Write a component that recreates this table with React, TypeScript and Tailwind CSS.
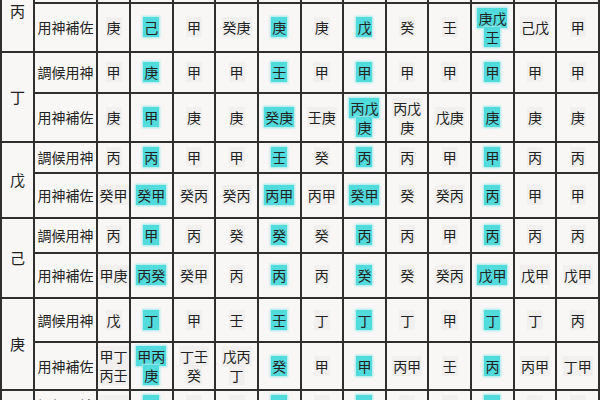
import React from "react";

type Group = { stem: string; tiao: string[]; yong: string[]; hideTiao?: boolean };

const groups: Group[] = [
  {
    stem: "丙",
    hideTiao: true,
    tiao: ["", "", "", "", "", "", "", "", "", "", "", ""],
    yong: ["庚", "己", "甲", "癸庚", "庚", "庚", "戊", "癸", "壬", "庚戊\n壬", "己戊", "甲"],
  },
  {
    stem: "丁",
    tiao: ["甲", "庚", "甲", "甲", "壬", "甲", "甲", "甲", "甲", "甲", "甲", "甲"],
    yong: ["庚", "甲", "庚", "庚", "癸庚", "壬庚", "丙戊\n庚", "丙戊\n庚", "戊庚", "庚", "庚", "庚"],
  },
  {
    stem: "戊",
    tiao: ["丙", "丙", "甲", "甲", "壬", "癸", "丙", "丙", "甲", "甲", "丙", "丙"],
    yong: ["癸甲", "癸甲", "癸丙", "癸丙", "丙甲", "丙甲", "癸甲", "癸", "癸丙", "丙", "甲", "甲"],
  },
  {
    stem: "己",
    tiao: ["丙", "甲", "丙", "癸", "癸", "癸", "丙", "丙", "甲", "丙", "丙", "丙"],
    yong: ["甲庚", "丙癸", "癸甲", "丙", "丙", "丙", "癸", "癸", "癸丙", "戊甲", "戊甲", "戊甲"],
  },
  {
    stem: "庚",
    tiao: ["戊", "丁", "甲", "壬", "壬", "丁", "丁", "丁", "甲", "丁", "丁", "丙"],
    yong: ["甲丁\n丙壬", "甲丙\n庚", "丁壬\n癸", "戊丙\n丁", "癸", "甲", "甲", "丙甲", "壬", "丙", "丙甲", "丁甲"],
  },
  {
    stem: "辛",
    tiao: ["己壬", "壬", "壬", "壬", "壬", "壬", "壬", "壬", "壬", "壬", "丙", "丙"],
    yong: ["", "", "", "", "", "", "", "", "", "", "", ""],
  },
];

const HL = new Set([1, 4, 6, 9]);

function Cell({ text, hl }: { text: string; hl: boolean }) {
  if (!text) return <div className="bg-[#f8f7f5]" />;
  const lines = text.split("\n");
  return (
    <div className="bg-[#f8f7f5] flex items-center justify-center text-center leading-[19px] text-[14px] text-[#222]">
      <div>
        {lines.map((l, i) => (
          <React.Fragment key={i}>
            <span
              className={
                hl
                  ? "bg-[#52dbdc] px-[1px] shadow-[0_0_2px_1px_#a3eaeb]"
                  : "bg-[#f1f0ee] px-[1px]"
              }
            >
              {l}
            </span>
            {i < lines.length - 1 && <br />}
          </React.Fragment>
        ))}
      </div>
    </div>
  );
}

export default function App() {
  return (
    <div
      className="w-[600px] h-[400px] overflow-hidden bg-[#f8f7f5]"
      style={{ fontFamily: '"Noto Sans CJK TC", "Noto Sans CJK SC", sans-serif' }}
    >
      <div className="mt-[-28px] grid grid-cols-[31px_61px_31px_repeat(11,1fr)] grid-rows-[30px_47px_39px_47px_29px_43px_33px_43px_42px_46px_28px_40px] gap-[2px] px-[2px] bg-[#2f2f2f]">
        {groups.map((g) => (
          <React.Fragment key={g.stem}>
            <div className="row-span-2 bg-[#f8f7f5] flex items-center justify-center text-[15px] text-[#222]">
              {g.stem}
            </div>
            <div className="bg-[#f8f7f5] flex items-center justify-center text-[14px] text-[#222] whitespace-nowrap">
              {g.hideTiao ? "" : "調候用神"}
            </div>
            {g.tiao.map((t, i) => (
              <Cell key={"t" + i} text={t} hl={HL.has(i)} />
            ))}
            <div className="bg-[#f8f7f5] flex items-center justify-center text-[14px] text-[#222] whitespace-nowrap">
              {g.yong[0] ? "用神補佐" : ""}
            </div>
            {g.yong.map((t, i) => (
              <Cell key={"y" + i} text={t} hl={HL.has(i)} />
            ))}
          </React.Fragment>
        ))}
      </div>
    </div>
  );
}
